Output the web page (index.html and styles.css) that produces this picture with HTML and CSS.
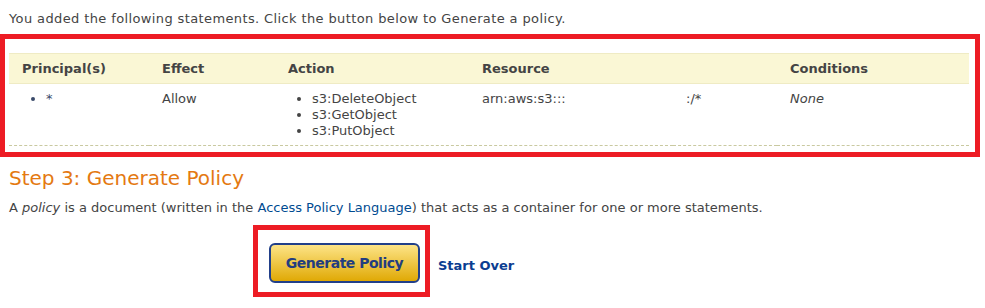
FILE: index.html
```html
<!DOCTYPE html>
<html lang="en">
<head>
    <meta charset="UTF-8">
    <title>AWS Policy Generator</title>
    <link rel="stylesheet" href="styles.css">
</head>
<body>
    <p class="intro">You added the following statements. Click the button below to Generate a policy.</p>

    <div class="highlight statements">
        <table class="stmt-table">
            <colgroup>
                <col style="width: 140px">
                <col style="width: 126px">
                <col style="width: 194px">
                <col style="width: 204px">
                <col style="width: 104px">
                <col>
            </colgroup>
            <thead>
                <tr>
                    <th>Principal(s)</th>
                    <th>Effect</th>
                    <th>Action</th>
                    <th>Resource</th>
                    <th></th>
                    <th>Conditions</th>
                </tr>
            </thead>
            <tbody>
                <tr>
                    <td><ul><li class="principal">*</li></ul></td>
                    <td>Allow</td>
                    <td>
                        <ul>
                            <li>s3:DeleteObject</li>
                            <li>s3:GetObject</li>
                            <li>s3:PutObject</li>
                        </ul>
                    </td>
                    <td>arn:aws:s3:::</td>
                    <td>:/*</td>
                    <td><em>None</em></td>
                </tr>
            </tbody>
        </table>
    </div>

    <h2 class="step-title">Step 3: Generate Policy</h2>
    <p class="step-text">A <em>policy</em> is a document (written in the <a href="#">Access Policy Language</a>) that acts as a container for one or more statements.</p>

    <div class="actions">
        <div class="highlight button-box">
            <button class="btn-generate">Generate Policy</button>
        </div>
        <a href="#" class="start-over">Start Over</a>
    </div>
</body>
</html>
```

FILE: styles.css
```css
body {
    margin: 0;
    font-family: 'DejaVu Sans', Verdana, sans-serif;
    font-size: 13px;
    line-height: 16px;
    color: #444;
    background: white;
}
a {
    color: #004b91;
    text-decoration: none;
}
.intro {
    margin: 11px 0 0 9px;
    letter-spacing: 0.38px;
}

/* red annotation boxes */
.highlight {
    border: 5px solid #ed1c24;
    box-sizing: border-box;
}
.statements {
    width: 980px;
    margin-top: 7px;
    padding: 14px 6px 6px 4px;
}

.stmt-table {
    width: 960px;
    table-layout: fixed;
    border-collapse: collapse;
}
.stmt-table th {
    background-color: #faf7d5;
    border-top: 1px solid #efebc4;
    border-bottom: 1px solid #efebc4;
    text-align: left;
    font-weight: bold;
    height: 29px;
    padding: 0 0 0 13px;
}
.stmt-table td {
    vertical-align: top;
    padding: 7px 0 6px 13px;
    border-bottom: 1px dashed #c9c9a0;
}
.stmt-table ul {
    margin: 0;
    padding-left: 24px;
}
.principal {
    color: #3a4a6a;
}

.step-title {
    margin: 9px 0 0 9px;
    font-size: 20px;
    line-height: 24px;
    font-weight: normal;
    color: #e47911;
}
.step-text {
    margin: 10px 0 0 9px;
}

.actions {
    display: flex;
    align-items: center;
    gap: 8px;
    margin: 9px 0 0 253px;
}
.button-box {
    padding: 13px 5px 9px 11px;
}
.btn-generate {
    display: block;
    width: 151px;
    height: 40px;
    border: 2px solid #22408a;
    border-radius: 6px;
    background: linear-gradient(#fde487, #e0a905);
    font-family: 'DejaVu Sans', Verdana, sans-serif;
    font-size: 14px;
    font-weight: bold;
    letter-spacing: -0.5px;
    color: #233d80;
    padding: 0;
}
.start-over {
    font-weight: bold;
    color: #0b3d91;
    margin-top: 10px;
}
```
